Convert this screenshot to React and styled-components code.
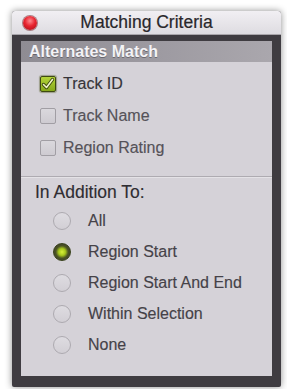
import React from "react"
import styled, { createGlobalStyle } from "styled-components"

const GlobalStyle = createGlobalStyle`
  html, body {
    margin: 0;
    padding: 0;
    background: #ffffff;
    font-family: "Liberation Sans", Arial, sans-serif;
  }
`

const Page = styled.div`
  width: 287px;
  height: 389px;
  padding: 11px 0 0 12px;
  box-sizing: border-box;
`

const Window = styled.div`
  width: 269px;
  height: 376px;
  display: flex;
  flex-direction: column;
  background: #3f3c41;
  border-radius: 3px 3px 2px 2px;
  box-shadow: 0 0 7px rgba(0, 0, 0, 0.45);
  overflow: hidden;
`

const TitleBar = styled.div`
  height: 24px;
  flex: none;
  display: grid;
  grid-template-columns: 1fr auto 1fr;
  align-items: center;
  padding: 0 11px;
  background: linear-gradient(#f1eff3, #dedce1);
  border-bottom: 1px solid #a9a6ab;
  box-sizing: border-box;
`

const CloseButton = styled.div`
  width: 14px;
  height: 14px;
  border-radius: 50%;
  justify-self: start;
  background: radial-gradient(circle at 50% 35%, #ff8a8f 0%, #e8242f 45%, #a50d16 100%);
  box-shadow: 0 0 0 1px rgba(110, 20, 25, 0.5);
`

const Title = styled.div`
  font-size: 17.5px;
  color: #29272b;
  -webkit-text-stroke: 0.2px #29272b;
`

const Frame = styled.div`
  flex: 1;
  padding: 6px 9px 11px 9px;
  display: flex;
`

const Panel = styled.div`
  flex: 1;
  display: flex;
  flex-direction: column;
  background: #d5d2d8;
`

const Header = styled.div`
  height: 21px;
  padding-left: 8px;
  display: flex;
  align-items: center;
  background: linear-gradient(90deg, #8f8c93 0%, #9c99a0 50%, #aaa7ad 100%);
  color: #f4f3f6;
  font-weight: bold;
  font-size: 16px;
  text-shadow: 0 1px 0 rgba(60, 58, 64, 0.5);
`

const CheckSection = styled.div`
  padding: 6px 0 12px 19px;
  border-bottom: 1px solid #aeabb1;
  box-shadow: 0 1px 0 #e4e2e6;
`

const CheckRow = styled.div`
  height: 32px;
  display: flex;
  align-items: center;
  gap: 7px;
  font-size: 16px;
  color: ${p => (p.checked ? "#37353a" : "#555259")};
  -webkit-text-stroke: 0.15px currentColor;
`

const Box = styled.div`
  width: 16px;
  height: 16px;
  box-sizing: border-box;
  border-radius: 2px;
  display: flex;
  align-items: center;
  justify-content: center;
  border: 1px solid ${p => (p.checked ? "#3e4a12" : "#a19ea4")};
  background: ${p =>
    p.checked
      ? "linear-gradient(#b4d43a, #86a81a)"
      : "linear-gradient(#dad8dd, #cecbd1)"};
  box-shadow: ${p => (p.checked ? "0 0 1px 1px rgba(70, 80, 20, 0.4)" : "none")};
`

const RadioSection = styled.div`
  padding: 5px 0 0 0;
  display: flex;
  flex-direction: column;
`

const SectionLabel = styled.div`
  height: 21px;
  line-height: 21px;
  padding-left: 14px;
  font-size: 17.5px;
  color: #2f2d32;
  -webkit-text-stroke: 0.15px currentColor;
  margin-bottom: 2px;
`

const RadioRow = styled.div`
  height: 31px;
  padding-left: 32px;
  display: flex;
  align-items: center;
  gap: 17px;
  font-size: 16px;
  color: #454248;
  -webkit-text-stroke: 0.15px currentColor;
`

const Radio = styled.div`
  width: 18px;
  height: 18px;
  box-sizing: border-box;
  border-radius: 50%;
  display: flex;
  align-items: center;
  justify-content: center;
  border: 1.5px solid ${p => (p.checked ? "#38401a" : "#adaab0")};
  background: ${p =>
    p.checked
      ? "radial-gradient(circle, #d8f03a 0%, #a8c81c 30%, #4b5224 55%, #3b3d35 100%)"
      : "linear-gradient(#dedce1, #d2cfd5)"};
`

const Check = () => (
  <svg width="14" height="14" viewBox="0 0 14 14">
    <path
      d="M2.5 7.5 L5.5 10.5 L11.5 2.5"
      fill="none"
      stroke="#3c4a0e"
      strokeWidth="3.4"
      strokeLinecap="round"
      strokeLinejoin="round"
    />
    <path
      d="M2.5 7.5 L5.5 10.5 L11.5 2.5"
      fill="none"
      stroke="#f2f6c8"
      strokeWidth="1.6"
      strokeLinecap="round"
      strokeLinejoin="round"
    />
  </svg>
)

const checks = [
  { label: "Track ID", checked: true },
  { label: "Track Name", checked: false },
  { label: "Region Rating", checked: false },
]

const radios = [
  { label: "All", checked: false },
  { label: "Region Start", checked: true },
  { label: "Region Start And End", checked: false },
  { label: "Within Selection", checked: false },
  { label: "None", checked: false },
]

const App = () => (
  <>
    <GlobalStyle />
    <Page>
      <Window>
        <TitleBar>
          <CloseButton />
          <Title>Matching Criteria</Title>
          <span />
        </TitleBar>
        <Frame>
          <Panel>
            <Header>Alternates Match</Header>

            <CheckSection>
              {checks.map(c => (
                <CheckRow key={c.label} checked={c.checked}>
                  <Box checked={c.checked}>{c.checked && <Check />}</Box>
                  {c.label}
                </CheckRow>
              ))}
            </CheckSection>

            <RadioSection>
              <SectionLabel>In Addition To:</SectionLabel>
              {radios.map(r => (
                <RadioRow key={r.label}>
                  <Radio checked={r.checked} />
                  {r.label}
                </RadioRow>
              ))}
            </RadioSection>
          </Panel>
        </Frame>
      </Window>
    </Page>
  </>
)

export default App
